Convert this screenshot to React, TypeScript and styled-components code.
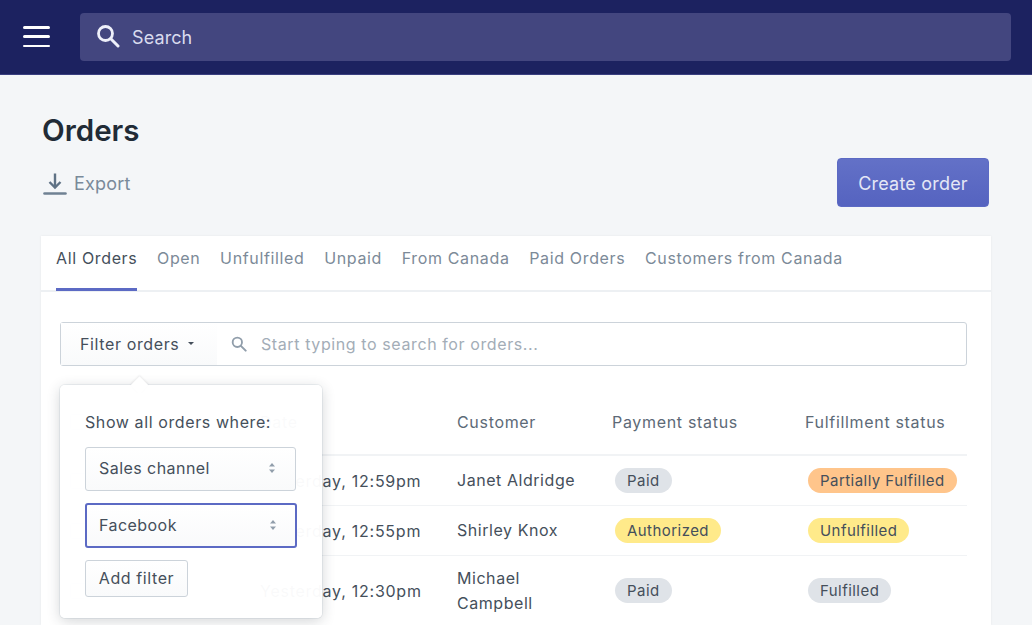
import { createGlobalStyle, styled } from "styled-components";

const GlobalStyle = createGlobalStyle`
  html, body {
    margin: 0;
    height: 100%;
    overflow: hidden;
    background-color: #f4f6f8;
    font-family: Inter, "Liberation Sans", sans-serif;
  }
  * {
    box-sizing: border-box;
  }
`;

const COLUMNS = "200px 197px 155px 193px 1fr";

const rows = [
  {
    date: "Yesterday, 12:59pm",
    customer: "Janet Aldridge",
    payment: { label: "Paid", tone: "gray" },
    fulfillment: { label: "Partially Fulfilled", tone: "orange" },
  },
  {
    date: "Yesterday, 12:55pm",
    customer: "Shirley Knox",
    payment: { label: "Authorized", tone: "yellow" },
    fulfillment: { label: "Unfulfilled", tone: "yellow" },
  },
  {
    date: "Yesterday, 12:30pm",
    customer: "Michael Campbell",
    payment: { label: "Paid", tone: "gray" },
    fulfillment: { label: "Fulfilled", tone: "gray" },
  },
];

const tabs = [
  "All Orders",
  "Open",
  "Unfulfilled",
  "Unpaid",
  "From Canada",
  "Paid Orders",
  "Customers from Canada",
];

const SearchIcon = ({ size, color }: { size: number; color: string }) => (
  <svg width={size} height={size} viewBox="0 0 24 24" fill="none">
    <circle cx="9.5" cy="9.5" r="7" stroke={color} strokeWidth="2.8" />
    <path d="M14.8 14.8L22 22" stroke={color} strokeWidth="3" strokeLinecap="round" />
  </svg>
);

const UpDown = () => (
  <svg width="8" height="12" viewBox="0 0 8 12">
    <path d="M4 1L7 4.4H1Z" fill="#919eab" />
    <path d="M4 11L7 7.6H1Z" fill="#919eab" />
  </svg>
);

export default function App() {
  return (
    <Page>
      <GlobalStyle />
      <TopBar>
        <MenuButton aria-label="Menu">
          <span />
          <span />
          <span />
        </MenuButton>
        <GlobalSearch>
          <SearchIcon size={24} color="#eef0fa" />
          <SearchText>Search</SearchText>
        </GlobalSearch>
      </TopBar>

      <Main>
        <Title>Orders</Title>
        <HeaderRow>
          <ExportLink>
            <svg width="24" height="24" viewBox="0 0 24 24" fill="none">
              <path d="M12 1.5V15" stroke="#5f7285" strokeWidth="2.4" />
              <path d="M6.5 10L12 15.5L17.5 10" stroke="#5f7285" strokeWidth="2.4" />
              <path d="M1.5 21.5H22.5" stroke="#6f8193" strokeWidth="2.6" strokeLinecap="round" />
            </svg>
            Export
          </ExportLink>
          <PrimaryButton>Create order</PrimaryButton>
        </HeaderRow>

        <Card>
          <Tabs>
            {tabs.map((tab, index) => (
              <Tab key={tab} $active={index === 0}>
                {tab}
              </Tab>
            ))}
          </Tabs>

          <CardBody>
            <FilterBar>
              <FilterButton>
                Filter orders
                <Caret />
              </FilterButton>
              <FilterSearch>
                <SearchIcon size={16} color="#919eab" />
                <Placeholder>Start typing to search for orders...</Placeholder>
              </FilterSearch>

              <Popover>
                <PopoverLabel>Show all orders where:</PopoverLabel>
                <SelectBox>
                  Sales channel
                  <UpDown />
                </SelectBox>
                <SelectBox $focused>
                  Facebook
                  <UpDown />
                </SelectBox>
                <AddFilterButton>Add filter</AddFilterButton>
              </Popover>
            </FilterBar>

            <TableHead>
              <CheckCell>
                <FakeCheck />
              </CheckCell>
              <HeadCell>Date</HeadCell>
              <HeadCell>Customer</HeadCell>
              <HeadCell>Payment status</HeadCell>
              <HeadCell>Fulfillment status</HeadCell>
            </TableHead>

            {rows.map((row) => (
              <TableRow key={row.date}>
                <CheckCell>
                  <FakeCheck />
                </CheckCell>
                <DateCell>{row.date}</DateCell>
                <CustomerCell>{row.customer}</CustomerCell>
                <Cell>
                  <Badge $tone={row.payment.tone}>{row.payment.label}</Badge>
                </Cell>
                <Cell>
                  <Badge $tone={row.fulfillment.tone}>{row.fulfillment.label}</Badge>
                </Cell>
              </TableRow>
            ))}
          </CardBody>
        </Card>
      </Main>
    </Page>
  );
}

const badgeColors: Record<string, string> = {
  gray: "#dfe3e8",
  yellow: "#ffea8a",
  orange: "#ffc58b",
};

const Page = styled.div`
  width: 1032px;
  height: 625px;
  overflow: hidden;
  background-color: #f4f6f8;
`;

const TopBar = styled.header`
  display: flex;
  align-items: center;
  gap: 30px;
  height: 75px;
  padding: 0 21px 1px 23px;
  background-color: #1c2260;
  border-bottom: 1px solid #3a3f80;
`;

const MenuButton = styled.div`
  display: flex;
  flex-direction: column;
  justify-content: space-between;
  width: 27px;
  height: 21px;

  span {
    height: 2.5px;
    border-radius: 2px;
    background-color: #ffffff;
  }
`;

const GlobalSearch = styled.div`
  flex: 1;
  display: flex;
  align-items: center;
  gap: 12px;
  height: 48px;
  padding: 0 16px 2px;
  border-radius: 4px;
  background-color: #43467f;
  color: #d9dbee;
  font-size: 18px;
`;

const SearchText = styled.span`
  padding-top: 3px;
  letter-spacing: 0.1px;
`;

const Main = styled.main`
  padding: 37px 41px 0;
`;

const Title = styled.h1`
  margin: 0;
  height: 36px;
  padding-left: 1px;
  font-size: 29.5px;
  line-height: 36px;
  font-weight: 600;
  color: #212b36;
`;

const HeaderRow = styled.div`
  display: flex;
  justify-content: space-between;
  align-items: flex-start;
  height: 78px;
  margin-top: 10px;
  padding: 0 2px 0 2px;
`;

const ExportLink = styled.div`
  display: flex;
  align-items: center;
  gap: 7px;
  margin-top: 14px;
  font-size: 18px;
  line-height: 24px;
  letter-spacing: 0.2px;
  color: #7a8a9a;
`;

const PrimaryButton = styled.button`
  width: 152px;
  height: 49px;
  padding-top: 2px;
  border: 1px solid #5c6ac4;
  border-radius: 4px;
  background: linear-gradient(180deg, #6371c7, #5563c0);
  color: #e4e7f6;
  font-family: inherit;
  font-size: 18px;
  letter-spacing: 0.2px;
`;

const Card = styled.section`
  width: 950px;
  background-color: #ffffff;
  box-shadow: 0 0 2px rgba(63, 63, 68, 0.08);
`;

const Tabs = styled.nav`
  display: flex;
  gap: 19.65px;
  height: 56px;
  padding: 0 15px;
  border-bottom: 2px solid #edf0f3;
`;

const Tab = styled.div<{ $active?: boolean }>`
  height: 55px;
  padding-top: 11px;
  font-size: 16px;
  line-height: 22px;
  letter-spacing: 0.65px;
  color: ${(props) => (props.$active ? "#454f5b" : "#7c8a98")};
  border-bottom: 3px solid ${(props) => (props.$active ? "#5c6ac4" : "transparent")};
`;

const CardBody = styled.div`
  padding: 30px 24px 0 19px;
`;

const FilterBar = styled.div`
  position: relative;
  display: flex;
  width: 907px;
  height: 44px;
  border: 1px solid #ccd3da;
  border-radius: 3px;
`;

const FilterButton = styled.div`
  display: flex;
  align-items: center;
  gap: 8px;
  width: 156px;
  padding-left: 19px;
  background: linear-gradient(180deg, #ffffff, #f9fafb);
  font-size: 16px;
  letter-spacing: 0.62px;
  color: #454f5b;
`;

const Caret = styled.span`
  width: 0;
  height: 0;
  margin-left: 1px;
  margin-top: -2px;
  border-left: 3.5px solid transparent;
  border-right: 3.5px solid transparent;
  border-top: 3.5px solid #454f5b;
`;

const FilterSearch = styled.div`
  flex: 1;
  display: flex;
  align-items: center;
  gap: 14px;
  padding-left: 14px;
`;

const Placeholder = styled.span`
  font-size: 16px;
  letter-spacing: 0.6px;
  color: #a3adb7;
`;

const Popover = styled.div`
  position: absolute;
  z-index: 2;
  top: 62px;
  left: -1px;
  width: 262px;
  height: 233px;
  padding: 25px 25px 0;
  border-radius: 5px;
  background-color: rgba(255, 255, 255, 0.97);
  box-shadow: 0 0 0 1px rgba(6, 44, 82, 0.06), 0 3px 14px rgba(33, 43, 54, 0.2);

  &::before {
    content: "";
    position: absolute;
    top: -6px;
    left: 73px;
    width: 13px;
    height: 13px;
    background-color: #ffffff;
    transform: rotate(45deg);
    box-shadow: -1px -1px 2px rgba(33, 43, 54, 0.08);
  }
`;

const PopoverLabel = styled.div`
  position: relative;
  height: 24px;
  margin-bottom: 13px;
  font-size: 16px;
  line-height: 24px;
  letter-spacing: 0.6px;
  color: #454f5b;
`;

const SelectBox = styled.div<{ $focused?: boolean }>`
  display: flex;
  align-items: center;
  justify-content: space-between;
  width: ${(props) => (props.$focused ? "212px" : "211px")};
  height: ${(props) => (props.$focused ? "45px" : "44px")};
  margin-bottom: 12px;
  padding: ${(props) => (props.$focused ? "0 18px 2px 12px" : "0 19px 2px 13px")};
  border: ${(props) => (props.$focused ? "2px solid #5c6ac4" : "1px solid #ccd3da")};
  border-radius: 3px;
  background: linear-gradient(180deg, #ffffff, #f9fafb);
  font-size: 16px;
  letter-spacing: 0.45px;
  color: #454f5b;
`;

const AddFilterButton = styled.div`
  display: flex;
  align-items: center;
  justify-content: center;
  width: 103px;
  height: 37px;
  padding-bottom: 2px;
  border: 1px solid #ccd3da;
  border-radius: 3px;
  background: linear-gradient(180deg, #ffffff, #f9fafb);
  font-size: 16px;
  letter-spacing: 0.6px;
  color: #454f5b;
`;

const TableHead = styled.div`
  display: grid;
  grid-template-columns: ${COLUMNS};
  align-items: center;
  height: 90px;
  padding-top: 24px;
  width: 907px;
  border-bottom: 2px solid #f1f3f5;
`;

const HeadCell = styled.div`
  font-size: 16px;
  letter-spacing: 0.68px;
  color: #5d6a77;
`;

const TableRow = styled.div`
  display: grid;
  grid-template-columns: ${COLUMNS};
  align-items: center;
  min-height: 50px;
  width: 907px;
  border-bottom: 1px solid #f1f3f5;

  &:last-child {
    min-height: 69px;
    border-bottom: none;
  }
`;

const CheckCell = styled.div`
  padding-left: 10px;
`;

const FakeCheck = styled.div`
  width: 16px;
  height: 16px;
  border: 1px solid #dfe3e8;
  border-radius: 2px;
`;

const Cell = styled.div`
  font-size: 16px;
  letter-spacing: 0.55px;
  color: #454f5b;
`;

const DateCell = styled(Cell)`
  letter-spacing: 0.75px;
`;

const CustomerCell = styled(Cell)`
  width: 125px;
  line-height: 25px;
`;

const Badge = styled.span<{ $tone: string }>`
  display: inline-block;
  margin-left: 3px;
  padding: 0 12px;
  height: 25px;
  border-radius: 13px;
  background-color: ${(props) => badgeColors[props.$tone]};
  font-size: 15px;
  line-height: 25px;
  letter-spacing: 0.45px;
  color: #454f5b;
`;
